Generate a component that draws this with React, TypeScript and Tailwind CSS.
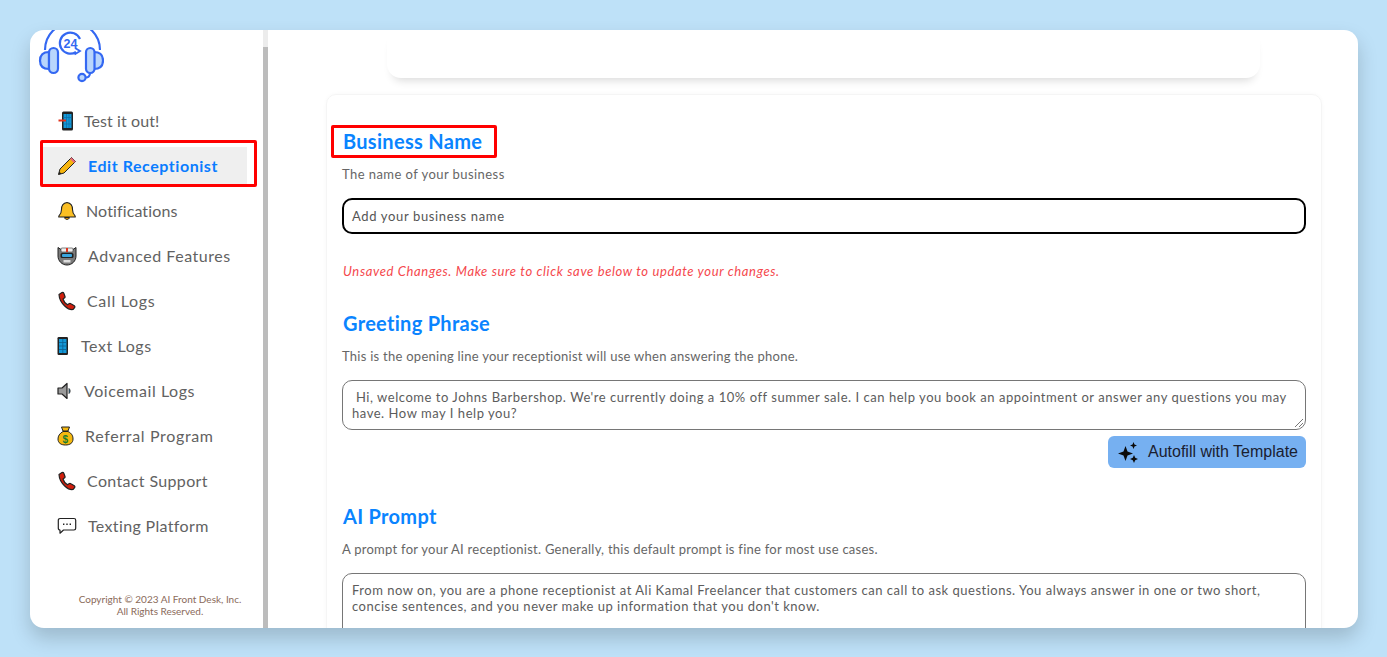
const sans = "font-['Lato','Noto_Sans',sans-serif]";

function Logo() {
  return (
    <svg width="66" height="54" viewBox="0 0 66 54" fill="none" stroke="#3468f2" strokeWidth="2.2" className="block">
      <path d="M7 20A27.500 27.500 0 0 1 62 20" />
      <path d="M11 22C5 22 2 25 2 30.500C2 36 5 39 11 39Z" fill="#b9d6fc" />
      <rect x="11" y="18" width="9" height="25" rx="4.500" fill="#b9d6fc" />
      <path d="M57 22C63 22 66 25 66 30.500C66 36 63 39 57 39Z" fill="#b9d6fc" transform="translate(-1 0)" />
      <rect x="48" y="18" width="8.500" height="25" rx="4.200" fill="#b9d6fc" />
      <path d="M52 43C52 46 50 47.500 48 47.500" />
      <circle cx="44" cy="47.500" r="3.600" fill="#b9d6fc" />
      <path d="M42 9A10.500 10.500 0 1 0 38 22" />
      <path d="M37 18L42 21L36.500 24.500" strokeWidth="1.800" />
      <text x="32.500" y="18" textAnchor="middle" fontSize="12.500" fontWeight="700" fill="#3468f2" stroke="none" fontFamily="Liberation Sans">24</text>
    </svg>
  );
}

function PhoneOut() {
  return (
    <svg width="20" height="20" viewBox="0 0 20 20">
      <rect x="5" y="0.500" width="11" height="19" rx="1.500" fill="#222" />
      <rect x="6.500" y="3" width="8" height="14" fill="#1398d8" />
      <path d="M1.500 9.500H9" stroke="#e2331c" strokeWidth="2" />
      <path d="M9.500 3V17M12 3V17M6.500 6.500H14.500M6.500 13H14.500" stroke="#0c6fa8" strokeWidth="0.700" />
    </svg>
  );
}

function Pencil() {
  return (
    <svg width="20" height="20" viewBox="0 0 20 20">
      <path d="M1.500 18.500L3 13L14.500 1.500L18.500 5.500L7 17Z" fill="#f6b40e" stroke="#222" strokeWidth="1" strokeLinejoin="round" />
      <path d="M14.500 1.500L18.500 5.500L17 7L13 3Z" fill="#e7697b" />
      <path d="M1.500 18.500L2.300 15.500L4.500 17.700Z" fill="#222" />
    </svg>
  );
}

function Bell() {
  return (
    <svg width="20" height="20" viewBox="0 0 20 20">
      <path d="M10 1.500C6 2 4.500 5 4.500 8.500C4.500 11.500 3.500 13.500 1.800 15.200V16H18.200V15.200C16.500 13.500 15.500 11.500 15.500 8.500C15.500 5 14 2 10 1.500Z" fill="#fbbf24" stroke="#222" strokeWidth="1.100" />
      <path d="M7.500 16.500C8 19 12 19 12.500 16.500Z" fill="#f59e0b" stroke="#222" strokeWidth="1" />
    </svg>
  );
}

function Robot() {
  return (
    <svg width="20" height="20" viewBox="0 0 20 20">
      <path d="M1 1.500L4 3.500H16L19 1.500V10C19 15 15 19 10 19C5 19 1 15 1 10Z" fill="#7b7b7b" stroke="#222" strokeWidth="1" strokeLinejoin="round" />
      <rect x="4" y="2" width="12" height="4" rx="1" fill="#eeeeee" stroke="#333" strokeWidth="0.600" />
      <rect x="9" y="2" width="2" height="4" fill="#e2331c" />
      <rect x="3.500" y="7" width="13" height="5" rx="1.500" fill="#222" />
      <rect x="5" y="8" width="10" height="3" rx="1" fill="#3aa5dd" />
      <path d="M6.500 14H13.500V16.500H6.500Z" fill="#dddddd" />
    </svg>
  );
}

function Phone() {
  return (
    <svg width="20" height="20" viewBox="0 0 20 20">
      <path d="M2 3.500L5 1.500C5.800 1.200 6.500 1.500 6.800 2.200L8 5.500C8.200 6.200 7.900 6.700 7.300 7.100L6 8C6.500 10 8.500 12.500 10.500 13.800L12 12.700C12.600 12.300 13.300 12.300 13.900 12.700L17.300 14.800C18 15.300 18 16 17.600 16.700L16 18.500C12 19.500 2.500 13 2 3.500Z" fill="#d21f0d" stroke="#222" strokeWidth="1.200" strokeLinejoin="round" />
    </svg>
  );
}

function Mobile() {
  return (
    <svg width="20" height="20" viewBox="0 0 20 20">
      <rect x="0.500" y="1" width="10.500" height="18" rx="1.200" fill="#222" />
      <rect x="2" y="3" width="7.500" height="14" fill="#1398d8" />
      <path d="M5.800 3V17M2 6.500H9.500M2 10H9.500M2 13.500H9.500" stroke="#0b5f90" strokeWidth="0.800" />
    </svg>
  );
}

function Speaker() {
  return (
    <svg width="20" height="20" viewBox="0 0 20 20">
      <path d="M1 7H5L10 2.500V17.500L5 13H1Z" fill="#9a9a9a" stroke="#222" strokeWidth="1.200" strokeLinejoin="round" />
      <path d="M12 7.500C13.500 9 13.500 11 12 12.500Z" fill="#3aa5dd" stroke="#222" strokeWidth="0.800" />
    </svg>
  );
}

function MoneyBag() {
  return (
    <svg width="20" height="20" viewBox="0 0 20 20">
      <path d="M4.500 1H12.500L11 5H6Z" fill="#f5b80e" stroke="#222" strokeWidth="1" strokeLinejoin="round" />
      <path d="M6 5.500H11C15 7.500 16 10 16 13C16 17 13 19 8.500 19C4 19 1 17 1 13C1 10 2.500 7.500 6 5.500Z" fill="#f5b80e" stroke="#222" strokeWidth="1" />
      <text x="8.500" y="16.500" textAnchor="middle" fontSize="10" fontWeight="700" fill="#1a7d2e" fontFamily="Liberation Sans">$</text>
    </svg>
  );
}

function Chat() {
  return (
    <svg width="20" height="20" viewBox="0 0 20 20" fill="none">
      <path d="M3 2.500H17C18 2.500 18.700 3.200 18.700 4.200V12.300C18.700 13.300 18 14 17 14H6.500L3 17.200V14C2 14 1.300 13.300 1.300 12.300V4.200C1.300 3.200 2 2.500 3 2.500Z" fill="#fff" stroke="#222" strokeWidth="1.200" strokeLinejoin="round" />
      <path d="M6 8.300H7.400M9.300 8.300H10.700M12.600 8.300H14" stroke="#222" strokeWidth="1.400" />
    </svg>
  );
}

function Sparkles() {
  return (
    <svg width="24" height="24" viewBox="0 0 24 24" fill="#0b0b0b">
      <path d="M9.500 6L11.500 11.500L17 13.500L11.500 15.500L9.500 21L7.500 15.500L2 13.500L7.500 11.500Z" />
      <path d="M17.500 2L18.500 4.500L21 5.500L18.500 6.500L17.500 9L16.500 6.500L14 5.500L16.500 4.500Z" />
      <path d="M18 15L19.200 17.800L22 19L19.200 20.200L18 23L16.800 20.200L14 19L16.800 17.800Z" />
    </svg>
  );
}

// tracking differs per row because Lato's widths don't line up with the picture evenly
const navItems = [
  { label: 'Test it out!', icon: <PhoneOut />, style: 'gap-[7px] tracking-[0.08px]' },
  { label: 'Notifications', icon: <Bell />, style: 'gap-[9px] tracking-[0.12px]' },
  { label: 'Advanced Features', icon: <Robot />, style: 'gap-[11px] tracking-[0.53px]' },
  { label: 'Call Logs', icon: <Phone />, style: 'gap-[10px] tracking-[0.68px]' },
  { label: 'Text Logs', icon: <Mobile />, style: 'gap-[4px] tracking-[0.57px]' },
  { label: 'Voicemail Logs', icon: <Speaker />, style: 'gap-[7px] tracking-[0.56px]' },
  { label: 'Referral Program', icon: <MoneyBag />, style: 'gap-[8px] tracking-[0.66px]' },
  { label: 'Contact Support', icon: <Phone />, style: 'gap-[10px] tracking-[0.35px]' },
  { label: 'Texting Platform', icon: <Chat />, style: 'gap-[11px] tracking-[0.35px]' },
];

function NavRow({ label, icon, style }: { label: string; icon: React.ReactNode; style: string }) {
  return (
    <div className={`h-[45px] pl-[27px] flex items-center ${style} text-[16px] text-[#626262]`}>
      <span className="shrink-0">{icon}</span>
      {label}
    </div>
  );
}

function Sidebar() {
  return (
    <aside className="w-[238px] shrink-0 flex overflow-hidden">
      <div className="w-[233px] flex flex-col">
        <div className="h-[68px] pl-[8px] overflow-hidden">
          <Logo />
        </div>
        <NavRow {...navItems[0]} />
        <div className="ml-[10px] w-[217px] -mt-[3px] mb-[1px] h-[47px] border-[3px] border-[#ff0000] rounded-[2px] pt-[4px] pr-[7px]">
          <div className="h-[37px] bg-[#efefef] pl-[14px] flex items-center gap-[11px] text-[16px] font-bold tracking-[0.55px] text-[#0a7cff]">
            <Pencil />
            Edit Receptionist
          </div>
        </div>
        {navItems.slice(1).map((n) => (
          <NavRow key={n.label} {...n} />
        ))}
        <p className="mt-[45px] pl-[27px] text-center text-[10px] leading-[12px] text-[#8a6a5a]">
          Copyright © 2023 AI Front Desk, Inc.
          <br />
          All Rights Reserved.
        </p>
      </div>
      <div className="w-[5px] bg-[#bcbcbc] flex flex-col">
        <div className="h-[17px] bg-[#ececec]" />
      </div>
    </aside>
  );
}

function Heading({ children }: { children: React.ReactNode }) {
  return <h2 className="text-[20px] leading-[24px] font-bold tracking-[0.3px] text-[#0a84ff]">{children}</h2>;
}

function Hint({ children, wide }: { children: React.ReactNode; wide?: boolean }) {
  return (
    <p className={`text-[13px] leading-[16px] text-[#666666] ${wide ? 'tracking-[0.44px]' : 'tracking-[0.26px]'}`}>
      {children}
    </p>
  );
}

export default function App() {
  return (
    <div className={`h-[657px] overflow-hidden bg-[#bee1f8] pl-[30px] pr-[29px] pt-[30px] ${sans}`}>
      <div className="h-[598px] bg-white rounded-[14px] overflow-hidden flex shadow-[0_10px_20px_rgba(0,0,0,0.18)]">
        <Sidebar />
        <main className="flex-1 min-w-0 overflow-hidden">
          <div className="ml-[119px] mr-[98px] h-[48px] rounded-b-[14px] bg-white shadow-[0_8px_10px_-6px_rgba(0,0,0,0.16)]" />
          <section className="mt-[16px] ml-[58px] mr-[36px] h-[600px] rounded-[10px] bg-white border border-[#f5f5f5] shadow-[0_0_4px_rgba(0,0,0,0.03)] pl-[15px] pr-[15px] pt-[30px]">
            <div className="-ml-[11px] w-[166px] h-[33px] border-[3px] border-[#ff0000] rounded-[2px] pl-[9px] pb-[2px] flex items-center">
              <Heading>Business Name</Heading>
            </div>
            <div className="mt-[8px]">
              <Hint wide>The name of your business</Hint>
            </div>
            <div className="mt-[16px] h-[36px] border-2 border-black rounded-[10px] pl-[8px] pt-px flex items-center text-[13px] tracking-[0.65px] text-[#555555]">
              Add your business name
            </div>
            <p className="mt-[29px] pl-px text-[13px] leading-[16px] italic tracking-[0.64px] text-[#f5484d]">
              Unsaved Changes. Make sure to click save below to update your changes.
            </p>
            <div className="mt-[32px] pl-px">
              <Heading>Greeting Phrase</Heading>
            </div>
            <div className="mt-[13px]">
              <Hint>This is the opening line your receptionist will use when answering the phone.</Hint>
            </div>
            <div className="relative mt-[16px] h-[50px] border border-[#767676] rounded-[10px] px-[9px] py-[8px] text-[13px] leading-[16px] tracking-[0.535px] text-[#5c5c5c]">
              <span className="ml-[4px]">Hi, welcome to Johns Barbershop. We're currently doing a 10% off summer sale. I can help you book an appointment or answer any questions you may have. How may I help you?</span>
              <svg width="10" height="10" viewBox="0 0 10 10" className="absolute right-px bottom-px" stroke="#777" strokeWidth="1">
                <path d="M1 9L9 1M5 9L9 5" />
              </svg>
            </div>
            <div className="mt-[6px] flex justify-end">
              <button type="button" className="w-[198px] h-[32px] rounded-[6px] bg-[#76b0f1] pl-[8px] flex items-center gap-[8px] font-['Liberation_Sans',sans-serif] text-[16px] text-[#1a2030]">
                <Sparkles />
                Autofill with Template
              </button>
            </div>
            <div className="mt-[36px] pl-px">
              <Heading>AI Prompt</Heading>
            </div>
            <div className="mt-[13px]">
              <Hint>A prompt for your AI receptionist. Generally, this default prompt is fine for most use cases.</Hint>
            </div>
            <div className="mt-[16px] h-[120px] border border-[#767676] rounded-[10px] px-[9px] py-[8px] text-[13px] leading-[16px] tracking-[0.51px] text-[#5c5c5c]">
              From now on, you are a phone receptionist at Ali Kamal Freelancer that customers can call to ask questions. You always answer in one or two short, concise sentences, and you never make up information that you don't know.
            </div>
          </section>
        </main>
      </div>
    </div>
  );
}
